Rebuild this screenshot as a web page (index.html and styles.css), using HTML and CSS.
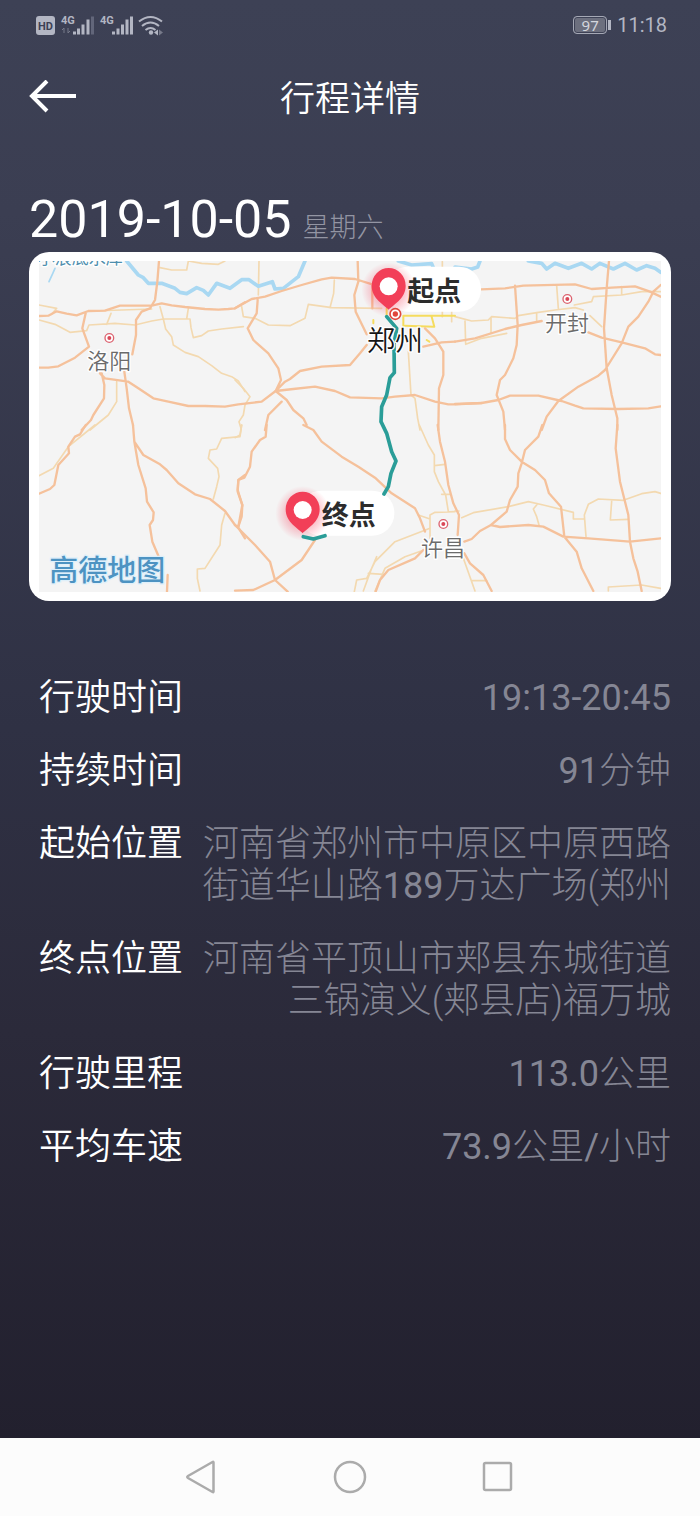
FILE: index.html
```html
<!DOCTYPE html>
<html lang="zh-CN">
<head>
<meta charset="utf-8">
<meta name="viewport" content="width=device-width, initial-scale=1">
<title>行程详情</title>
<link rel="stylesheet" href="styles.css">
</head>
<body>
<div class="status">
  <svg class="status-icons" width="130" height="24" viewBox="0 0 130 24" aria-hidden="true">
    <rect x="0" y="3" width="19" height="19" rx="3" fill="#b3b6c3"/>
    <text class="hd" x="9.5" y="17">HD</text>
    <text class="net" x="25" y="11">4G</text>
    <path class="faint" d="M28 20v-5l-2 2M32 15v5l2-2"/>
    <path class="bars" d="M38.500 21.500v-3M42.500 21.500v-6M47 21.500v-10M52 21.500v-15"/>
    <path class="bars dim" d="M56.500 21.500v-18"/>
    <text class="net" x="64" y="11">4G</text>
    <path class="bars" d="M77.500 21.500v-3M82 21.500v-6M86.500 21.500v-10M91 21.500v-15M95.500 21.500v-18"/>
    <path class="wifi" d="M103 8.500q11.500-9 23 0M106 13q8.500-7 17 0M109.500 17q5-4 10 0"/>
    <circle cx="115" cy="19.500" r="2.200" fill="#b3b6c3"/>
    <path d="M122 16.500v6l-4-3z" fill="#b3b6c3"/><path d="M123 16.500v6l4-3z" fill="#777a8a"/>
  </svg>
  <div class="status-right">
    <span class="battery">97</span>
    <span class="clock">11:18</span>
  </div>
</div>
<header class="bar">
  <button class="back" type="button" aria-label="返回">
    <svg width="48" height="34" viewBox="0 0 48 34"><path d="M47 16H3M18 1L3 16l15 15" fill="none" stroke="#fff" stroke-width="4"/></svg>
  </button>
  <h1 class="title">行程详情</h1>
</header>
<main class="main">
  <div class="date"><span class="day">2019-10-05</span><span class="week">星期六</span></div>
  <div class="card">
    <svg class="map" viewBox="0 0 1866 993" role="img" aria-label="行程地图">
      <defs>
        <radialGradient id="glow"><stop offset="0.500" stop-color="#f5405c" stop-opacity=".35"/><stop offset="1" stop-color="#f5405c" stop-opacity="0"/></radialGradient>
        <g id="pin">
          <circle r="82" cy="10" fill="url(#glow)"/>
          <path d="M0 70C-12 56-51 38-51-2A51 53 0 0 1 51-2C51 38 12 56 0 70z" fill="#f23f58"/>
          <circle r="27" fill="#fff"/>
        </g>
        <g id="town"><circle r="13" fill="#fff" stroke="#dc6370" stroke-width="4"/><circle r="6" fill="#d94757"/></g>
      </defs>
      <rect width="1866" height="993" fill="#f4f4f4"/>

      <g class="minor">
        <path transform="translate(-42 -48)" d="M42 180L95 190L80 208M42 225L90 238L135 262L185 257L192 240L270 235L330 240L380 228L415 222H495L498 248L505 278L530 272L550 258L590 252L655 245M258 205L245 238M405 185L415 222L422 252L440 275L445 300L480 322L520 335L560 362L590 385L620 395L640 408L660 440M490 190L485 222M275 410V470L250 510L195 555M405 68L440 75H485L490 48L530 55L580 58L600 48M200 198L380 192"/>
        <path transform="translate(588 -48)" d="M72 48L70 150M20 185L25 215L60 220L100 240L165 242L210 220L220 178L290 188L440 190M298 105L296 145L285 188M0 405L25 430L45 455L30 480L25 510L12 530L18 550M520 320L528 450L540 460L548 520L555 555M650 190v40M622 50V215"/>
        <path transform="translate(1248 -48)" d="M0 215L50 228L100 225L110 215L180 220L190 212L245 203L300 195L360 188L385 195M405 212L440 245M358 180L410 170L415 155L500 150L560 140H617M305 122L310 190M500 125v25M30 228L32 298L80 280L155 265M108 218v45M245 203v27"/>
        <path transform="translate(-42 492)" d="M210 0L130 65L85 130L42 152M650 0L645 35L590 40L575 72L555 75L550 100L578 130L582 155L575 185L565 222M600 265L590 300L585 360L540 430L517 432V460L525 498"/>
        <path transform="translate(588 492)" d="M20 0L15 30L0 38M553 0L580 60L598 90V140L610 170L632 210L640 260M585 310L480 350L420 410L395 460L365 465L358 500M582 370L510 395L450 430L420 498M585 340V270L600 262L660 260M400 445L445 448M598 122L630 118M620 208h25M550 270l35 12M425 395L410 430L385 498"/>
        <path transform="translate(1248 492)" d="M20 278L55 263L160 245L220 230L265 240L355 262V282H388M245 240L235 252L245 275L252 300M393 335L388 270L400 238L430 222L505 226L560 206L600 200L617 205M470 228L466 285L520 283M460 498V486L560 480L617 490M25 400L60 498M50 467h45M0 258h12"/>
      </g>
      <path class="city" transform="translate(588 -48)" d="M505 212H660M590 215L598 245L510 242M455 190V215M415 225v10M505 212v30M575 285l8 5"/>

      <g class="river">
        <path transform="translate(-42 -48)" d="M305 48L340 90L355 98L370 115H410L450 130L465 142L485 146L515 128L535 136L550 150L575 115L615 130L650 104L672 104L700 124L742 110L750 132L775 130L820 95L840 48"/>
        <path transform="translate(588 -48)" d="M490 48L530 60L590 56L600 80"/>
        <path transform="translate(1248 -48)" d="M0 66L50 72L68 66L75 48M220 48L260 55L275 72L300 55L340 70L380 55L410 72L435 55L475 72L510 55L545 75L575 62L600 70L617 82"/>
        <path class="stream" transform="translate(-42 -48)" d="M90 70L82 88L72 110"/>
      </g>

      <g class="major">
        <path transform="translate(-42 -48)" d="M402 48L397 110L390 165L375 190L350 200L333 225V270L322 328M42 213L70 212L95 199L125 206L155 211L190 198L240 197L285 182H380L410 175L440 181L480 186L540 192L580 194L610 192L630 190L660 172M182 205L172 250L192 305L150 338L100 364L70 368H42M225 385L240 400L310 410L340 430L385 460L430 470L490 483L540 483L600 485L640 478L710 470L752 438M230 385L238 420L237 460L205 510L198 525L170 555M298 380L305 430L312 490L324 540"/>
        <path transform="translate(588 -48)" d="M0 190L50 162L90 155L140 138L200 120L260 103L290 98L360 102L412 118V190M68 165L65 205L38 250L55 285L100 325L130 370L138 405L122 438L150 410L165 402L195 378L260 365L345 360L375 325L395 300M122 438L175 432L240 425L300 438L345 457L440 460L480 455L540 450L600 470L640 478H660L740 474M368 48L370 110L358 150L362 200L395 268M122 438L155 465L175 495L205 520L215 540M140 470L100 510L90 555M570 250L600 280L625 320V390L612 430L610 555M565 305L620 292L660 290"/>
        <path transform="translate(1248 -48)" d="M78 133L150 130L205 122L360 118L410 132L470 128L540 124L585 140L617 155M0 290L60 280L150 252L200 240L260 228M400 262L440 278L500 292L570 310L600 328L617 330M180 122L188 240L185 300L175 340L150 390L135 405L125 450L145 500L150 555M0 477L80 474L130 465L165 452L250 452L320 468L360 482L385 490L490 492L580 490L617 484M462 48L455 130L447 250L455 370L470 450L487 520V555M617 120L595 140L580 170L550 215L520 245L500 295L450 375L430 392L370 425L310 468L275 515L260 555"/>
        <path transform="translate(-42 492)" d="M182 0L165 28L150 35L130 65L132 85L100 120L88 180L75 192L42 206M324 0L328 50L340 120L362 190L366 230L386 262L384 285L374 300L382 350L400 392M428 450L426 500M328 50L355 90L405 118L425 135L460 175L510 208L555 222L600 258L630 300L640 308L660 340M640 305L650 275L652 240L638 200L640 165L660 150"/>
        <path transform="translate(588 492)" d="M205 0L235 15L260 50L320 95L370 125L420 158L470 205L540 250L555 280L570 320M95 0L92 35L75 45L50 80L45 125L28 158L10 165L8 195L22 240L10 305M0 300L60 360L105 410L120 465L158 500M0 497L55 495L120 465L200 405L240 345M608 0L615 50L630 110L640 180L655 235L672 270L668 330M565 375L540 400L460 435L435 465L422 500"/>
        <path transform="translate(1248 492)" d="M150 0V42L165 75L200 110L240 135L270 165L282 205L318 245L328 335L365 380L380 430L415 498M487 0L482 70L495 170L520 270L525 350L535 400L548 440L560 498M262 0L250 35L210 75L200 115L190 145L188 185L165 225L155 260L108 300L75 318L50 342L28 350M108 300L135 306L220 300L265 305L325 335L400 340L525 350L617 340M28 385L45 415L85 450L110 498"/>
      </g>

      <rect x="1040" y="17" width="286" height="135" rx="66" fill="#fff"/>
      <rect x="780" y="689" width="286" height="135" rx="66" fill="#fff"/>
      <use href="#town" x="211" y="231"/>
      <use href="#town" x="1585" y="114"/>
      <use href="#town" x="1213" y="789"/>
      <use href="#pin" x="1049" y="76"/>
      <use href="#pin" x="791" y="747"/>

      <text class="water" x="-4" y="8">小浪底水库</text>
      <text class="place" x="145" y="324">洛阳</text>
      <text class="place" x="1518" y="210">开封</text>
      <text class="place" x="1146" y="884">许昌</text>
      <path class="route" d="M1043 167L1073 202L1065 250L1066 335L1053 350L1043 402L1028 437L1026 482L1043 517L1058 572L1071 600L1056 637L1048 677L1035 699M793 827L823 834L858 824"/>
      <circle cx="1069" cy="159" r="16" fill="#fff" stroke="#e0473c" stroke-width="5"/><circle cx="1069" cy="159" r="8" fill="#e0473c"/>
      <text class="place capital" x="984" y="271">郑州</text>
      <text class="stop" x="1105" y="121">起点</text>
      <text class="stop" x="848" y="791">终点</text>
      <text class="brand" x="31" y="960">高德地图</text>
    </svg>
  </div>
  <dl class="info">
    <div class="row"><dt>行驶时间</dt><dd><span class="num">19:13-20:45</span></dd></div>
    <div class="row"><dt>持续时间</dt><dd><span class="num">91</span>分钟</dd></div>
    <div class="row"><dt>起始位置</dt><dd>河南省郑州市中原区中原西路街道华山路<span class="num">189</span>万达广场(郑州</dd></div>
    <div class="row"><dt>终点位置</dt><dd>河南省平顶山市郏县东城街道三锅演义(郏县店)福万城</dd></div>
    <div class="row"><dt>行驶里程</dt><dd><span class="num">113.0</span>公里</dd></div>
    <div class="row"><dt>平均车速</dt><dd><span class="num">73.9</span>公里<span class="num">/</span>小时</dd></div>
  </dl>
</main>
<nav class="nav">
  <button type="button" aria-label="返回"><svg width="34" height="34" viewBox="0 0 34 34"><path d="M28.500 2.500v29q0 1-1 .5L3 18q-1.500-1 0-2L27.500 2q1-.5 1 .5z"/></svg></button>
  <button type="button" aria-label="主页"><svg width="34" height="34" viewBox="0 0 34 34"><circle cx="17" cy="17" r="15"/></svg></button>
  <button type="button" aria-label="最近任务"><svg width="34" height="34" viewBox="0 0 34 34"><rect x="3" y="3" width="27" height="27" rx="1.500"/></svg></button>
</nav>
</body>
</html>
```

FILE: styles.css
```css
* { box-sizing: border-box; }

body {
  margin: 0;
  min-height: 100vh;
  display: flex;
  flex-direction: column;
  background: linear-gradient(#3d4155 0, #3b3e52 14%, #2f3144 48%, #2b2a3a 68%, #22202e 95%);
  color: #fff;
  font-family: Roboto, "Noto Sans CJK SC", sans-serif;
}

button {
  padding: 0;
  border: 0;
  background: none;
  display: flex;
  align-items: center;
  justify-content: center;
}

.status {
  display: flex;
  justify-content: space-between;
  align-items: center;
  height: 50px;
  padding: 0 33px 0 36px;
  color: #b3b6c3;
}
.status-icons { display: block; }
.hd { font: bold 11px Roboto, sans-serif; fill: #3d4155; text-anchor: middle; }
.net { font: bold 11px Roboto, sans-serif; fill: #b3b6c3; }
.bars { stroke: #b3b6c3; stroke-width: 3; fill: none; }
.dim { stroke: #62667a; }
.faint { stroke: #777a8a; stroke-width: 1; fill: none; }
.wifi { stroke: #b3b6c3; stroke-width: 2; fill: none; }

.status-right { display: flex; align-items: center; gap: 10px; }
.battery {
  position: relative;
  width: 34px;
  height: 18px;
  border: 1px solid #a5a8b5;
  border-radius: 4px;
  background: #6c6f7e;
  box-shadow: inset 0 0 0 1px #3d4155;
  font: 15px/16px "Noto Sans", sans-serif;
  text-align: center;
  color: #d5d7de;
}
.battery::after {
  content: "";
  position: absolute;
  right: -5px;
  top: 3px;
  width: 3px;
  height: 10px;
  background: #b3b6c3;
}
.clock { font-size: 20px; line-height: 24px; }

.bar {
  display: grid;
  grid-template-columns: 48px 1fr 48px;
  align-items: center;
  height: 94px;
  padding: 0 29px;
}
.title {
  margin: 0;
  padding-top: 5px;
  text-align: center;
  font-size: 35px;
  font-weight: 350;
  line-height: 48px;
}

.main { flex: 1; padding: 46px 29px 40px; }
.date { display: flex; align-items: baseline; gap: 11px; height: 62px; }
.day { font-size: 52px; line-height: 60px; }
.week { font-size: 27px; line-height: 36px; font-weight: 300; color: #9395a3; }

.card {
  padding: 9px 10px;
  border-radius: 20px;
  background: #fff;
}
.map { display: block; width: 100%; height: auto; }
.map path { fill: none; stroke-linejoin: round; stroke-linecap: round; }
.map #pin path { fill: #f23f58; }
.minor { stroke: #f3d9b0; stroke-width: 5; }
.city { stroke: #f5dc5e; stroke-width: 6; }
.river { stroke: #a9d8f2; stroke-width: 11; }
.stream { stroke-width: 5; }
.major { stroke: #f5c19b; stroke-width: 7; }
.route { stroke: #2a9d98; stroke-width: 11; }
.map text { font-family: "Noto Sans CJK SC", sans-serif; paint-order: stroke; stroke: #fff; stroke-width: 8; stroke-linejoin: round; }
.map .place { font-size: 66px; font-weight: 350; fill: #6b6b6b; }
.map .capital { font-size: 84px; fill: #151515; }
.map .stop { font-size: 81px; font-weight: 700; fill: #2c2c2c; stroke: none; }
.map .water { font-size: 51px; fill: #4f8fae; }
.map .brand { font-size: 87px; font-weight: 500; fill: #4d93c2; stroke: #dff0fa; }

.info {
  display: flex;
  flex-direction: column;
  gap: 31px;
  margin: 76px 0 0;
  padding-left: 10px;
  font-size: 36px;
  line-height: 42px;
}
.row { display: flex; gap: 16px; }
.row dt { flex: none; font-weight: 350; }
.row dd { flex: 1; margin: 0; text-align: right; font-weight: 300; color: #858694; }
.num { font-weight: 400; }

.nav {
  display: flex;
  justify-content: center;
  align-items: center;
  gap: 100px;
  height: 78px;
  background: #fcfcfc;
}
.nav button { width: 48px; height: 48px; }
.nav svg { fill: none; stroke: #ababab; stroke-width: 2.500; }
```
